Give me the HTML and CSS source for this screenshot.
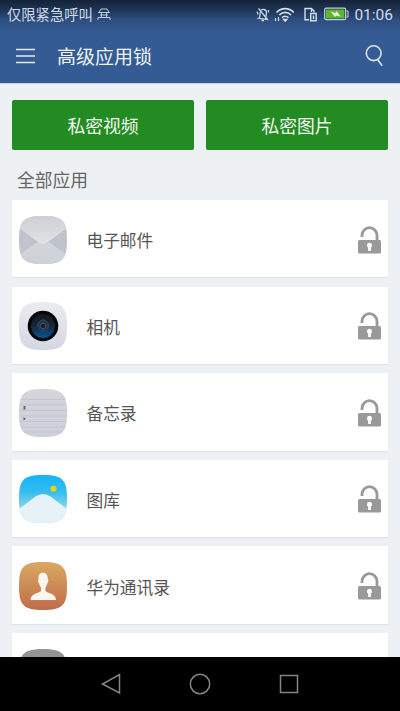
FILE: index.html
```html
<!DOCTYPE html>
<html lang="zh-CN">
<head>
    <meta charset="UTF-8">
    <meta name="viewport" content="width=device-width, initial-scale=1.0">
    <title>高级应用锁</title>
    <link rel="stylesheet" href="styles.css">
</head>
<body>
    <!-- shared shapes -->
    <svg class="defs" width="0" height="0">
        <defs>
            <clipPath id="tile"><path d="M24 0C43.500 0 48 4.500 48 24S43.500 48 24 48 0 43.500 0 24 4.500 0 24 0Z"/></clipPath>
            <linearGradient id="mailBg" x1="0" y1="0" x2="0" y2="1"><stop offset="0" stop-color="#d3d6da"/><stop offset="1" stop-color="#cdd0d6"/></linearGradient>
            <linearGradient id="flapBg" x1="0" y1="0" x2="0" y2="1"><stop offset="0" stop-color="#cdd0d4"/><stop offset="1" stop-color="#e0e2e5"/></linearGradient>
            <linearGradient id="cameraBg" x1="0" y1="0" x2="0" y2="1"><stop offset="0" stop-color="#ececee"/><stop offset="1" stop-color="#d4d6e2"/></linearGradient>
            <linearGradient id="lensBg" x1="0" y1="0" x2="0" y2="1"><stop offset="0" stop-color="#14171d"/><stop offset=".5" stop-color="#152638"/><stop offset="1" stop-color="#08549c"/></linearGradient>
            <linearGradient id="memoBg" x1="0" y1="0" x2="0" y2="1"><stop offset="0" stop-color="#d5d5da"/><stop offset="1" stop-color="#cdd0dc"/></linearGradient>
            <linearGradient id="skyBg" x1="0" y1="0" x2="0" y2="1"><stop offset="0" stop-color="#15b3f8"/><stop offset=".35" stop-color="#35bcf0"/><stop offset=".75" stop-color="#9bdde0"/></linearGradient>
            <linearGradient id="contactBg" x1="0" y1="0" x2="0" y2="1"><stop offset="0" stop-color="#d9a962"/><stop offset="1" stop-color="#bf6c49"/></linearGradient>
            <symbol id="lock" viewBox="0 0 23 28">
                <path d="M4 11V9.200a7.500 7.500 0 0 1 15 0V15" fill="none" stroke="#999" stroke-width="2.800"/>
                <rect y="14" width="23" height="13.500" rx="1.500" fill="#999"/>
                <path d="M11.500 16.800a2.600 2.600 0 0 1 1.400 4.800V25h-2.800v-3.400a2.600 2.600 0 0 1 1.400-4.800Z" fill="#fff"/>
            </symbol>
        </defs>
    </svg>

    <header class="header">
        <div class="status-bar">
            <span class="carrier">仅限紧急呼叫</span>
            <svg class="bug" width="14" height="13" viewBox="0 0 14 13" fill="none" stroke="#bdc9dc">
                <path d="M2 4.500 4 1h6l2 3.500M1 4.500h12M3 7h8M1 12V9.500h12V12M4.500 4.500v5M9.500 4.500v5"/>
            </svg>
            <svg class="bell" width="14" height="15" viewBox="0 0 14 15" fill="none" stroke="#c9d3e2" stroke-width="1.300">
                <path d="M3.500 11 4.300 5C4.600 3 6 2 8 2.500s2.800 1.500 2.500 3.500l-.8 5 1 1.500-8-1.200ZM5.500 13.500h2.500M2.500 1.500 12 13M1 4.500l1 3M12.500 3v2.500"/>
            </svg>
            <svg class="wifi" width="21" height="15" viewBox="0 0 21 15" fill="none" stroke="#d5deea" stroke-width="1.600">
                <path d="M2.500 5.500C7.500.3 15 .3 19.800 5.500M5.300 8c3.500-3.500 8.300-3.500 11.800 0M8 10.700c2-1.800 4.400-1.800 6.400 0"/>
                <path d="M11.200 14.300 9.500 12.400h3.400ZM1.500 11v3M4.500 10v4" stroke-width="1.200"/>
            </svg>
            <svg class="sim" width="13" height="15" viewBox="0 0 13 15" fill="none" stroke="#d5deea" stroke-width="1.400">
                <path d="M5 12.700H1V1.500h6.500L10 4v1.500M7.500 1.500V5"/>
                <path d="M6.700 6.500h5.500v7.300H6.700ZM9.500 8.500v3.500"/>
            </svg>
            <svg class="battery" width="25" height="14" viewBox="0 0 25 14">
                <rect x=".7" y="1.200" width="21" height="11.500" rx="1.500" fill="none" stroke="#c5d0df" stroke-width="1.200"/>
                <rect x="2" y="2.500" width="18.400" height="8.900" fill="#5cb82b"/>
                <path d="M22.500 4h1.500v6h-1.500" fill="none" stroke="#c5d0df"/>
                <path d="M6.500 4.500 11.500 6l1-2 4 5.500-4.500-1-1 1.500Z" fill="#e5f2de"/>
            </svg>
            <span class="clock">01:06</span>
        </div>
        <div class="title-bar">
            <svg class="menu" width="19" height="16" viewBox="0 0 19 16" stroke="#e3eaf3" stroke-width="1.600">
                <path d="M0 1.500h19M0 8h19M0 14.500h19"/>
            </svg>
            <h1 class="title">高级应用锁</h1>
            <svg class="search" width="20" height="24" viewBox="0 0 20 24" fill="none" stroke="#dce5f0" stroke-width="1.600">
                <circle cx="8.700" cy="9.200" r="7.400"/>
                <path d="m12.500 15.500 4.700 6.200"/>
            </svg>
        </div>
    </header>

    <main class="content">
        <div class="buttons">
            <button class="btn" type="button">私密视频</button>
            <button class="btn" type="button">私密图片</button>
        </div>
        <h2 class="section">全部应用</h2>
        <ul class="apps">
            <li class="app">
                <svg class="app-icon" viewBox="0 0 48 48"><g clip-path="url(#tile)">
                    <rect width="48" height="48" fill="#bfc4cc"/>
                    <path d="M0 39 24 22l24 17v9H0Z" fill="url(#mailBg)"/>
                    <path d="M0 0h48v12L28 26.500q-4 3-8 0L0 12Z" fill="url(#flapBg)"/>
                </g></svg>
                <span class="app-name">电子邮件</span>
                <svg class="lock"><use href="#lock"/></svg>
            </li>
            <li class="app">
                <svg class="app-icon" viewBox="0 0 48 48"><g clip-path="url(#tile)">
                    <rect width="48" height="48" fill="url(#cameraBg)"/>
                    <circle cx="24" cy="24" r="15.300" fill="#060607"/>
                    <circle cx="24" cy="24" r="12" fill="url(#lensBg)"/>
                    <circle cx="24" cy="23.500" r="5.500" fill="#22354a" stroke="#3b4653"/>
                    <circle cx="24" cy="24" r="2.800" fill="#101d2c" stroke="#3f5873"/>
                </g></svg>
                <span class="app-name">相机</span>
                <svg class="lock"><use href="#lock"/></svg>
            </li>
            <li class="app">
                <svg class="app-icon" viewBox="0 0 48 48"><g clip-path="url(#tile)">
                    <rect width="48" height="48" fill="url(#memoBg)"/>
                    <path d="M0 10.500h48M0 16h48M0 21.500h48M0 27h48M0 32.500h48M0 38h48M0 43h48" stroke="#bfc1cb" stroke-width=".8"/>
                    <path d="M4.500 17h2v3.500h-2ZM4.500 28v3.500l2.500-1.500Z" fill="#64666f"/>
                </g></svg>
                <span class="app-name">备忘录</span>
                <svg class="lock"><use href="#lock"/></svg>
            </li>
            <li class="app">
                <svg class="app-icon" viewBox="0 0 48 48"><g clip-path="url(#tile)">
                    <rect width="48" height="48" fill="url(#skyBg)"/>
                    <circle cx="34.500" cy="13.800" r="3" fill="#f3d00d"/>
                    <path d="M0 34 16.500 21.500q7.500-5 15 0L48 34v14H0Z" fill="#e6f2f7"/>
                </g></svg>
                <span class="app-name">图库</span>
                <svg class="lock"><use href="#lock"/></svg>
            </li>
            <li class="app">
                <svg class="app-icon" viewBox="0 0 48 48"><g clip-path="url(#tile)">
                    <rect width="48" height="48" fill="url(#contactBg)"/>
                    <path d="M22.500 10.700c4-.7 6.500 2.300 6.300 6.300 1.200 1 .4 3.500-.6 4.500-.4 2-1.200 3-1.700 4v3.500c1.500 2.500 10.500 2 10.500 9H11.500c0-7 9-6.500 10.500-9v-3.500c-.7-1-1.500-2-1.800-4-1.200-1-1.800-3.500-.6-4.500-.5-3 .4-5.500 2.900-6.300Z" fill="#fbf6f0"/>
                </g></svg>
                <span class="app-name">华为通讯录</span>
                <svg class="lock"><use href="#lock"/></svg>
            </li>
            <li class="app">
                <svg class="app-icon" viewBox="0 0 48 48"><g clip-path="url(#tile)">
                    <rect width="48" height="48" fill="#969490"/>
                </g></svg>
            </li>
        </ul>
    </main>

    <nav class="nav-bar">
        <svg width="22" height="22" viewBox="0 0 22 22"><path d="M19.500 1.500v18.500L2.500 11Z"/></svg>
        <svg width="22" height="22" viewBox="0 0 22 22"><circle cx="11" cy="11" r="9.700"/></svg>
        <svg width="22" height="22" viewBox="0 0 22 22"><path d="M2.500 2.500h17v17h-17Z"/></svg>
    </nav>
</body>
</html>
```
FILE: styles.css
```css
* {
    box-sizing: border-box;
}
body {
    display: flex;
    flex-direction: column;
    height: 711px;
    margin: 0;
    overflow: hidden;
    background-color: #edf1f3;
    font-family: Roboto, "Noto Sans CJK SC", sans-serif;
    color: #555;
}
svg {
    flex-shrink: 0;
}
.defs {
    position: absolute;
}

/* header */
.header {
    height: 83px;
    flex-shrink: 0;
    background: linear-gradient(#152238 0, #1f3555 10px, #2d4e80 20px, #345b93 32px);
    box-shadow: 0 1px 1px #cbd5df;
}
.status-bar {
    display: flex;
    align-items: center;
    height: 28px;
    padding: 0 7px;
    color: #d3dbe7;
}
.carrier {
    padding-top: 2px;
    font-size: 14.3px;
    line-height: 26px;
}
.bug {
    margin-left: 4px;
}
.bell {
    margin-left: auto;
}
.wifi {
    margin-left: 4px;
}
.sim {
    margin-left: 9px;
}
.battery {
    margin-left: 7px;
}
.clock {
    padding-top: 2px;
    margin-left: 5px;
    font-size: 15.5px;
}
.title-bar {
    display: flex;
    align-items: center;
    height: 55px;
    padding: 0 15px 0 16px;
}
.title {
    margin: 0 0 0 22px;
    padding-top: 4px;
    font-size: 19px;
    font-weight: 400;
    line-height: 28px;
    color: #eef3f9;
}
.search {
    margin-left: auto;
}

/* content */
.content {
    flex: 1;
    min-height: 0;
    padding: 17px 12px 0;
    overflow: hidden;
}
.buttons {
    display: flex;
    gap: 12px;
}
.btn {
    flex: 1;
    height: 50px;
    padding: 0;
    border: none;
    border-radius: 2px;
    background-color: #228b22;
    font-family: inherit;
    font-size: 17.8px;
    color: #f2f8f2;
}
.section {
    margin: 0;
    padding: 5px 5px 0;
    height: 50px;
    font-size: 17.8px;
    font-weight: 400;
    line-height: 52px;
    color: #666;
}
.apps {
    display: flex;
    flex-direction: column;
    gap: 9.2px;
    margin: 0;
    padding: 0;
    list-style: none;
}
.app {
    display: flex;
    align-items: center;
    height: 77.4px;
    padding: 2px 7px 0;
    background-color: #fff;
    box-shadow: 0 1px 1px #e0e3e8;
}
.app-icon {
    width: 48px;
    height: 48px;
}
.app-name {
    margin-left: 19.5px;
    padding-top: 1px;
    font-size: 16.7px;
}
.lock {
    width: 23px;
    height: 28px;
    margin-left: auto;
}

/* system navigation */
.nav-bar {
    display: flex;
    justify-content: center;
    gap: 67px;
    height: 54px;
    padding-top: 16px;
    flex-shrink: 0;
    background-color: #000;
    fill: none;
    stroke: #858585;
    stroke-width: 1.5;
}
```
